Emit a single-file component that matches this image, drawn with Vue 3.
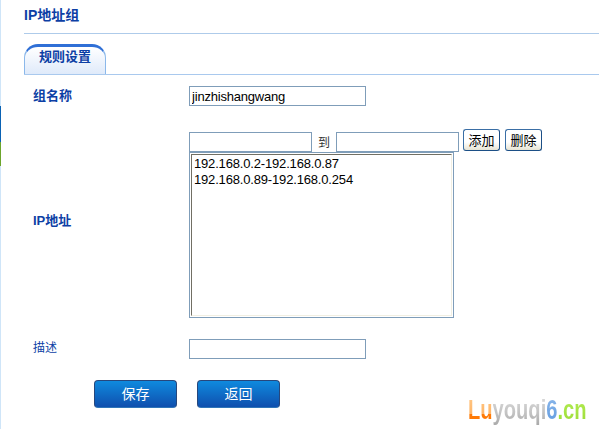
<template>
  <div class="page">
    <div class="rail" />
    <main class="main">
      <h1 class="title">IP地址组</h1>
      <div class="tabs">
        <div class="tab">规则设置</div>
      </div>

      <form class="form" @submit.prevent>
        <div class="row row-name">
          <label class="label strong">组名称</label>
          <input v-model="groupName" class="field" type="text">
        </div>

        <div class="row row-ip">
          <label class="label strong">IP地址</label>
          <div class="ip-box">
            <div class="ip-range">
              <input class="field small" type="text">
              <span class="to">到</span>
              <input class="field small" type="text">
              <button class="mini-btn first" type="button">添加</button>
              <button class="mini-btn" type="button">删除</button>
            </div>
            <div class="list-outer">
              <div class="list">
                <div v-for="item in ranges" :key="item">{{ item }}</div>
              </div>
            </div>
          </div>
        </div>

        <div class="row row-desc">
          <label class="label">描述</label>
          <input class="field" type="text">
        </div>

        <div class="actions">
          <button class="action" type="button">保存</button>
          <button class="action" type="button">返回</button>
        </div>
      </form>

      <div class="logo">
        <span class="lu">Lu</span><span class="you">youqi</span><span class="six">6</span><span class="cn">.cn</span>
      </div>
    </main>
  </div>
</template>

<script setup>
import { ref } from 'vue'

const groupName = ref('jinzhishangwang')
const ranges = ['192.168.0.2-192.168.0.87', '192.168.0.89-192.168.0.254']
</script>

<style>
html,
body {
  margin: 0;
  background: #ffffff;
  overflow: hidden;
}
</style>

<style scoped>
.page {
  display: flex;
  width: 599px;
  height: 429px;
  overflow: hidden;
  font-family: "Liberation Sans", "Noto Sans CJK SC", sans-serif;
  font-size: 12px;
  color: #0d3fa5;
}

.rail {
  flex: none;
  width: 1px;
  background: linear-gradient(
    #cfe5f8 0,
    #cfe5f8 106px,
    #0a62b4 106px,
    #0a62b4 142px,
    #6ca52c 142px,
    #6ca52c 166px,
    #cfe5f8 166px
  );
}

.main {
  position: relative;
  flex: 1;
  min-width: 0;
  padding-left: 23px;
}

.title {
  height: 33px;
  margin: 0;
  border-bottom: 1px solid #aecbea;
  font-size: 14px;
  font-weight: 700;
  line-height: 30px;
}

.tabs {
  display: flex;
  height: 30px;
  margin-top: 10px;
  border-bottom: 1px solid #a9c9ee;
}

.tab {
  width: 82px;
  height: 30px;
  border: 1px solid #8bb8ea;
  border-bottom: 0;
  border-top: 3px solid #2f6fd6;
  border-radius: 14px 14px 0 0;
  background: linear-gradient(#ffffff, #dfeafa);
  font-size: 13px;
  font-weight: 700;
  line-height: 20px;
  text-align: center;
  box-sizing: border-box;
}

.form {
  padding-left: 9px;
}

.row {
  display: grid;
  grid-template-columns: 156px 1fr;
  align-items: center;
}

.row-name {
  margin-top: 11px;
}

.row-ip {
  margin-top: 22px;
}

.row-ip .label {
  padding-bottom: 4px;
}

.row-desc {
  margin-top: 21px;
}

.row-desc .label {
  align-self: start;
  line-height: 18px;
}

.label {
  font-size: 12px;
  line-height: 16px;
}

.strong {
  font-size: 13px;
  font-weight: 700;
}

.field {
  width: 177px;
  height: 20px;
  padding: 0 2px;
  border: 1px solid #7f9db9;
  border-radius: 0;
  background: #ffffff;
  color: #000000;
  font: 13px "Liberation Sans", sans-serif;
  letter-spacing: -0.2px;
  outline: 0;
  box-sizing: border-box;
}

.field.small {
  width: 123px;
}

.ip-range {
  display: flex;
  align-items: flex-end;
  height: 24px;
}

.to {
  width: 24px;
  color: #333333;
  font-size: 12px;
  line-height: 17px;
  text-align: center;
}

.mini-btn {
  width: 37px;
  height: 22px;
  margin: 0 0 1px 5px;
  padding: 0;
  border: 1px solid;
  border-color: #3a6ea5 #1c4f86 #1c4f86 #3a6ea5;
  border-radius: 3px;
  background: linear-gradient(#ffffff 60%, #e6e3d3);
  color: #000000;
  font: 13px "Noto Sans CJK SC", sans-serif;
  line-height: 18px;
  align-self: flex-end;
}

.mini-btn.first {
  margin-left: 4px;
}

.list-outer {
  width: 265px;
  height: 166px;
  padding: 1px;
  border: 1px solid #7f9db9;
  box-sizing: border-box;
}

.list {
  height: 100%;
  padding: 1px 2px;
  border: 1px solid;
  border-color: #716f64 #f1efe2 #f1efe2 #716f64;
  color: #000000;
  font-size: 13px;
  letter-spacing: -0.17px;
  line-height: 16px;
  box-sizing: border-box;
}

.actions {
  display: flex;
  gap: 20px;
  margin-top: 21px;
  padding-left: 61px;
}

.action {
  width: 83px;
  height: 28px;
  padding: 0 0 2px;
  border: 1px solid #27477c;
  border-bottom-color: #2f75b8;
  border-radius: 4px;
  background: linear-gradient(#0f8ade, #0f4fae);
  color: #ffffff;
  font: 14px "Noto Sans CJK SC", sans-serif;
}

.logo {
  position: absolute;
  left: 467px;
  top: 396px;
  font: 700 27px/28px "Liberation Sans", sans-serif;
  white-space: nowrap;
  transform: scaleX(0.745);
  transform-origin: left center;
}

.logo span {
  -webkit-background-clip: text;
  background-clip: text;
  color: transparent;
}

.lu {
  background-image: linear-gradient(#ffc98a 0, #ffb567 62%, #ff7a05 62%);
}

.you {
  background-image: linear-gradient(#dcdcdc 0, #c3c3c3 60%, #a9a9a9 100%);
}

.six {
  background-image: linear-gradient(#8db8ea, #5f9ae0);
}

.cn {
  background-image: linear-gradient(#b6ee57, #9bdc35);
}
</style>
